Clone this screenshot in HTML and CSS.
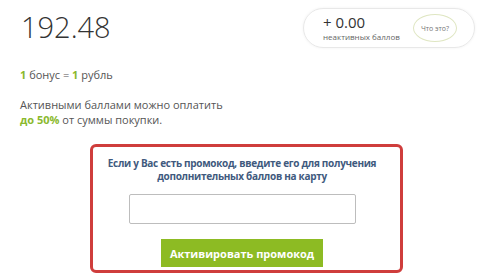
FILE: index.html
```
<!DOCTYPE html>
<html lang="ru">
<head>
<meta charset="utf-8">
<link rel="stylesheet" href="styles.css">
</head>
<body>
<div class="page">
  <div class="top">
    <div class="amount">192.48</div>
    <div class="pill">
      <div class="inactive">
        <div class="inactive-value">+ 0.00</div>
        <div class="inactive-label">неактивных баллов</div>
      </div>
      <div class="what">Что это?</div>
    </div>
  </div>
  <div class="rate"><b class="green">1</b> бонус = <b class="green">1</b> рубль</div>
  <div class="note">Активными баллами можно оплатить<br><b class="green">до 50%</b> от суммы покупки.</div>
  <div class="promo">
    <div class="promo-text">Если у Вас есть промокод, введите его для получения<br>дополнительных баллов на карту</div>
    <input class="promo-input" type="text">
    <button class="promo-btn">Активировать промокод</button>
  </div>
</div>
</body>
</html>
```
FILE: styles.css
```
html, body {
  margin: 0;
  padding: 0;
  background: #ffffff;
}
body {
  font-family: "Open Sans", "Liberation Sans", sans-serif;
  color: #555555;
}
.page {
  padding: 7px 5px 0 20px;
}
.top {
  display: flex;
  justify-content: space-between;
  align-items: flex-start;
}
.amount {
  font-size: 29px;
  font-weight: 300;
  color: #333333;
  line-height: 39px;
  padding-left: 1px;
}
.pill {
  margin-top: 1px;
  box-sizing: border-box;
  width: 172px;
  height: 40px;
  border: 1px solid #e8e8e8;
  border-radius: 20px;
  box-shadow: 0 0 3px rgba(0,0,0,0.06);
  display: flex;
  align-items: center;
  justify-content: space-between;
  padding: 0 17px 0 19px;
}
.inactive-value {
  font-size: 15px;
  line-height: 17px;
  color: #333333;
}
.inactive-label {
  font-size: 8px;
  line-height: 11px;
  color: #666666;
}
.what {
  width: 44px;
  height: 28px;
  box-sizing: border-box;
  border: 1.5px solid #dfe6c2;
  border-radius: 50%;
  font-size: 7px;
  color: #777777;
  display: flex;
  align-items: center;
  justify-content: center;
}
.rate {
  margin-top: 19px;
  font-size: 11px;
  line-height: 15px;
}
.green {
  color: #8ab92d;
  font-weight: 700;
}
.note {
  margin-top: 15px;
  font-size: 11px;
  line-height: 15px;
}
.promo {
  margin: 17px 0 0 70px;
  width: 313px;
  height: 129px;
  box-sizing: border-box;
  border: 3px solid #cf3d3c;
  border-radius: 6px;
  display: flex;
  flex-direction: column;
  align-items: center;
  padding: 10px 9px 0 0;
}
.promo-text {
  font-size: 10px;
  font-weight: 700;
  line-height: 13px;
  letter-spacing: -0.3px;
  color: #3f5a7e;
  text-align: center;
}
.promo-input {
  margin-top: 11px;
  width: 227px;
  height: 30px;
  box-sizing: border-box;
  border: 1px solid #bdbdbd;
  border-radius: 2px;
  background: #ffffff;
}
.promo-btn {
  margin-top: 15px;
  width: 162px;
  height: 28px;
  border: none;
  background: #8dbb23;
  color: #ffffff;
  font-family: "Open Sans", "Liberation Sans", sans-serif;
  font-size: 11px;
  font-weight: 700;
}
```
